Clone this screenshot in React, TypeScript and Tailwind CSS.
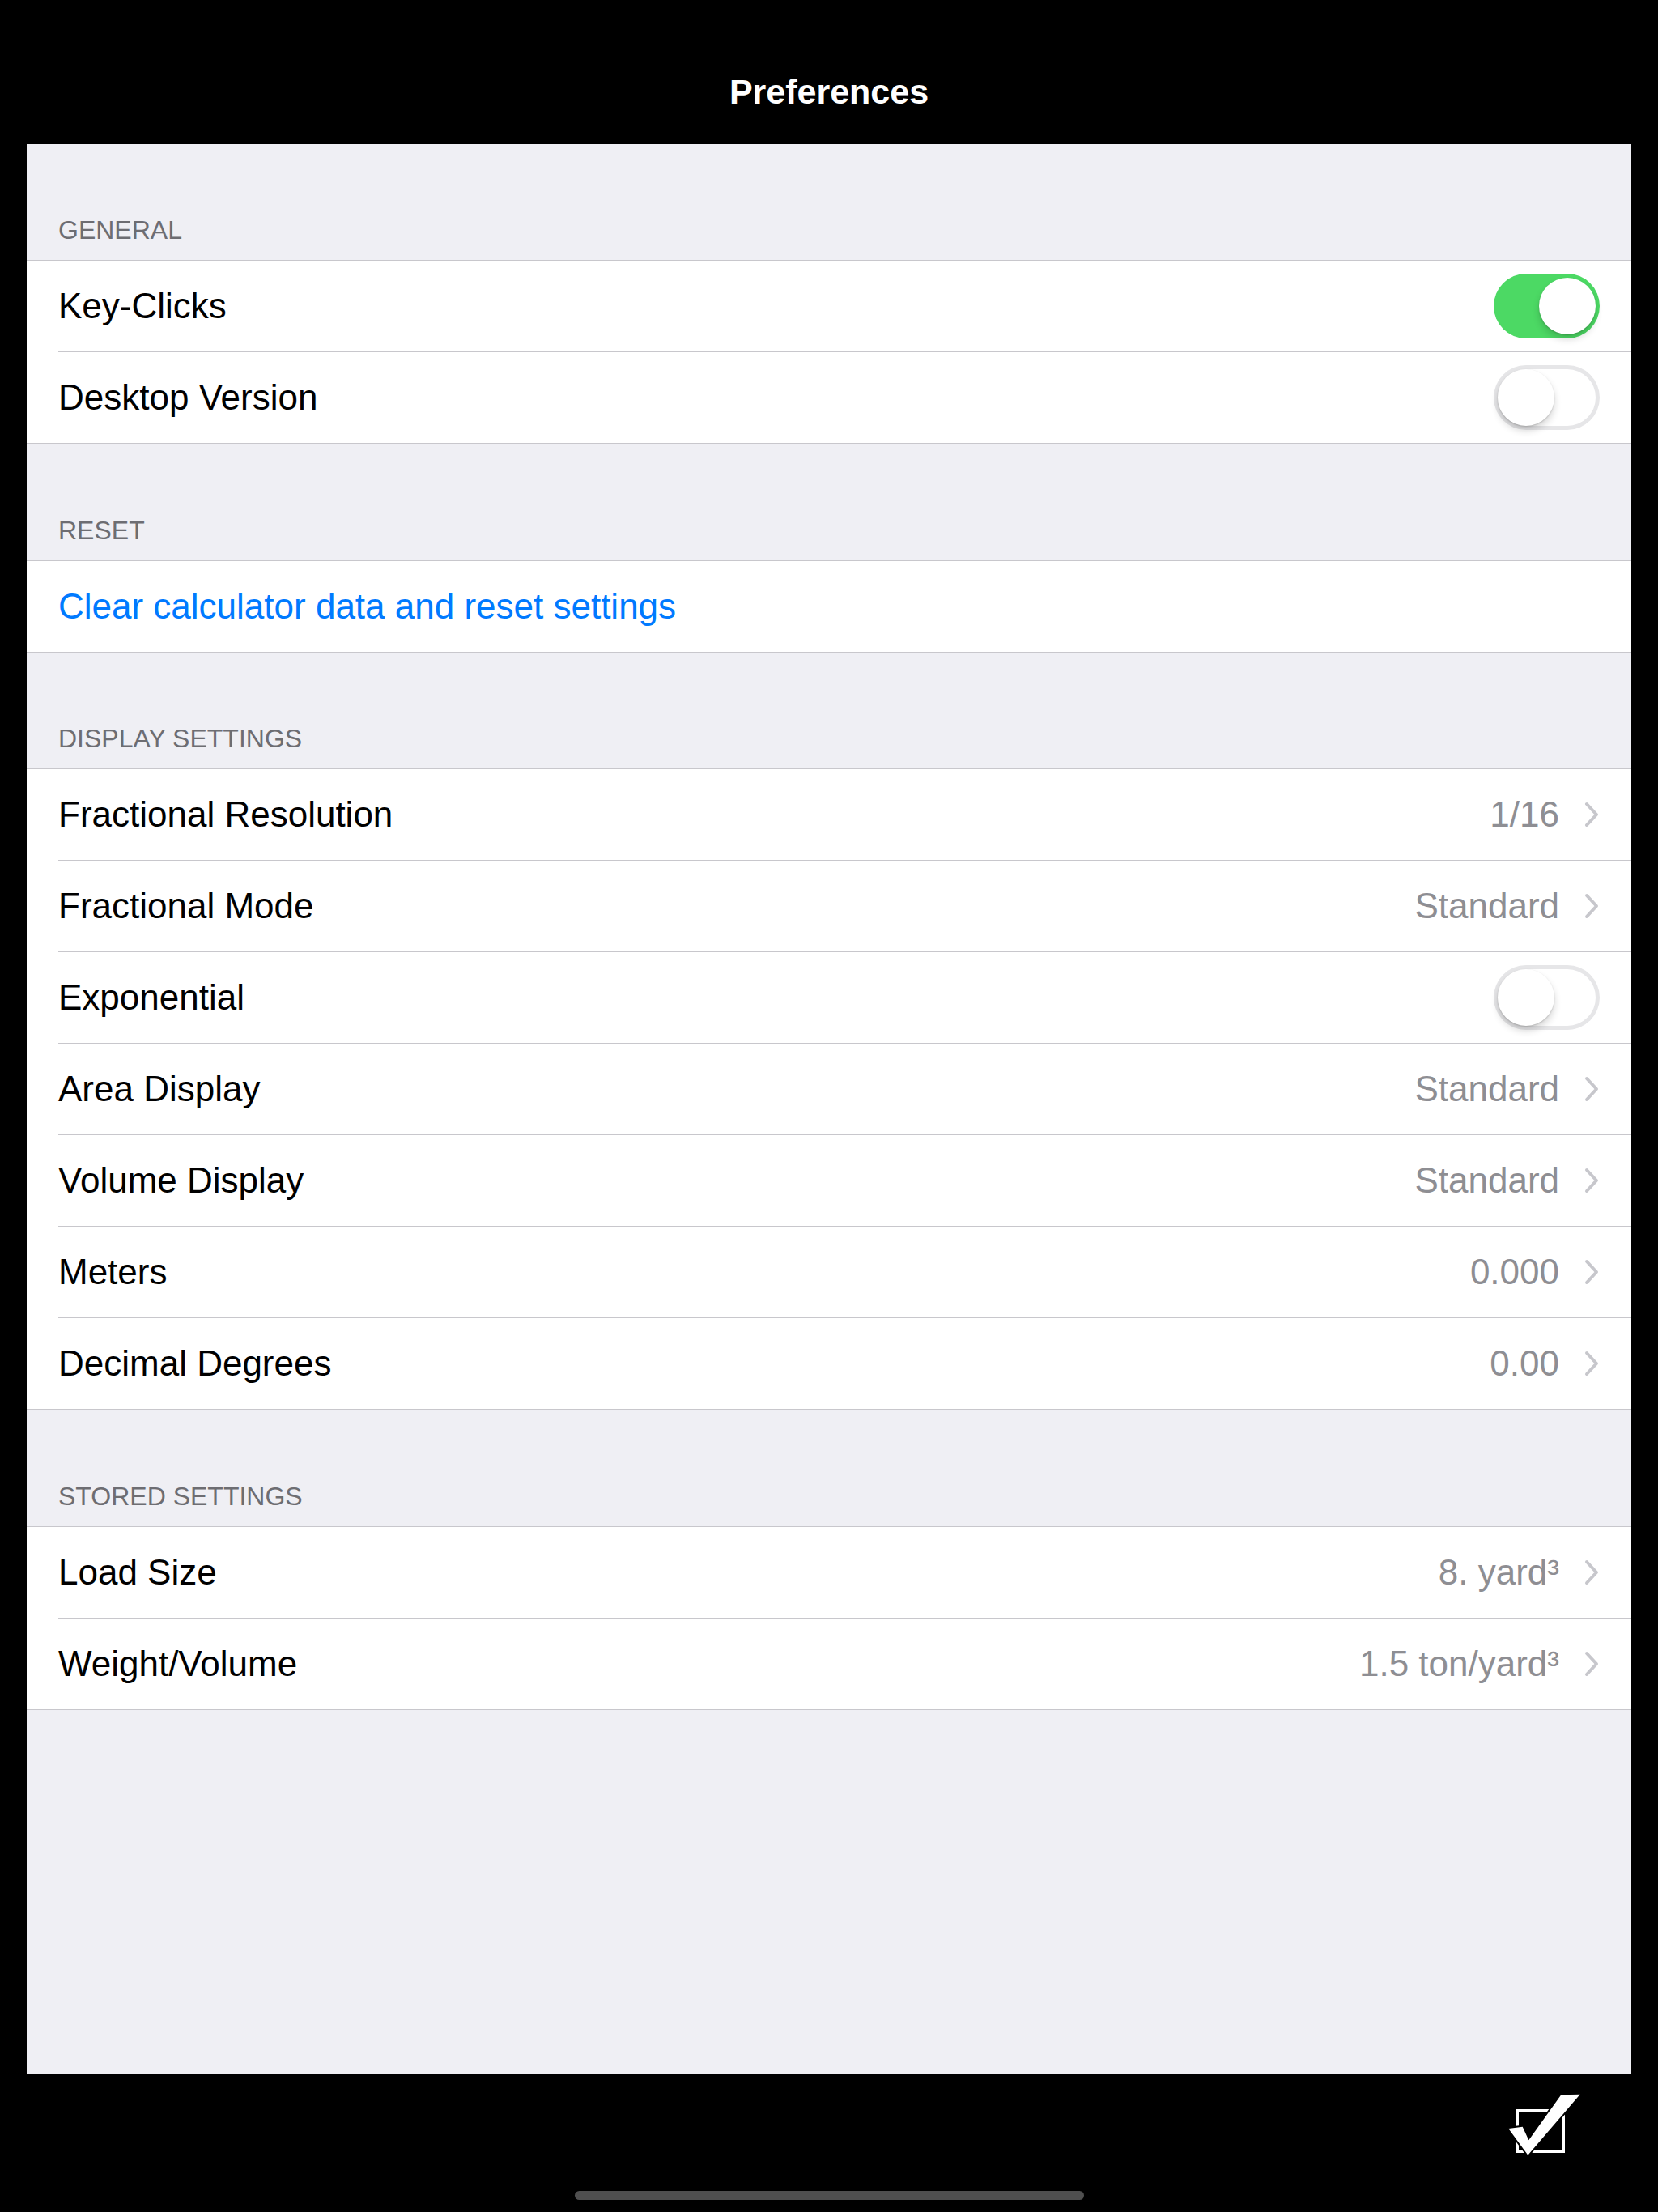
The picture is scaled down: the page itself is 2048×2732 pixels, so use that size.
import React from "react";

type Row =
  | { kind: "toggle"; label: string; on: boolean }
  | { kind: "value"; label: string; value: string }
  | { kind: "action"; label: string };

type Section = { title: string; headerClass: string; rows: Row[] };

const sections: Section[] = [
  {
    title: "GENERAL",
    headerClass: "h-[143px]",
    rows: [
      { kind: "toggle", label: "Key-Clicks", on: true },
      { kind: "toggle", label: "Desktop Version", on: false },
    ],
  },
  {
    title: "RESET",
    headerClass: "h-[144px]",
    rows: [{ kind: "action", label: "Clear calculator data and reset settings" }],
  },
  {
    title: "DISPLAY SETTINGS",
    headerClass: "h-[143px]",
    rows: [
      { kind: "value", label: "Fractional Resolution", value: "1/16" },
      { kind: "value", label: "Fractional Mode", value: "Standard" },
      { kind: "toggle", label: "Exponential", on: false },
      { kind: "value", label: "Area Display", value: "Standard" },
      { kind: "value", label: "Volume Display", value: "Standard" },
      { kind: "value", label: "Meters", value: "0.000" },
      { kind: "value", label: "Decimal Degrees", value: "0.00" },
    ],
  },
  {
    title: "STORED SETTINGS",
    headerClass: "h-[144px]",
    rows: [
      { kind: "value", label: "Load Size", value: "8. yard³" },
      { kind: "value", label: "Weight/Volume", value: "1.5 ton/yard³" },
    ],
  },
];

function Toggle({ on }: { on: boolean }) {
  const knob =
    "w-[70px] h-[70px] rounded-full bg-white shadow-[0_6px_10px_rgba(0,0,0,0.16),0_1px_2px_rgba(0,0,0,0.18)]";
  if (on) {
    return (
      <div className="w-[131px] h-[80px] rounded-full bg-[#4cd964] flex items-center justify-end pr-[5px]">
        <div className={knob} />
      </div>
    );
  }
  return (
    <div className="w-[131px] h-[80px] rounded-full bg-white shadow-[inset_0_0_0_5px_#e6e6e8] flex items-center pl-[5px]">
      <div className={knob} />
    </div>
  );
}

function Chevron() {
  return (
    <svg width="18" height="32" viewBox="0 0 18 32" className="ml-[31px] shrink-0">
      <path
        d="M3 3 L15 16 L3 29"
        fill="none"
        stroke="#c7c7cc"
        strokeWidth="4"
        strokeLinecap="round"
        strokeLinejoin="round"
      />
    </svg>
  );
}

function RowView({ row }: { row: Row }) {
  if (row.kind === "toggle") {
    return (
      <div className="h-[112px] flex items-center justify-between pl-[39px] pr-[39px]">
        <span className="text-[44px] leading-[48px] text-black">{row.label}</span>
        <Toggle on={row.on} />
      </div>
    );
  }
  if (row.kind === "action") {
    return (
      <div className="h-[112px] flex items-center pl-[39px] pr-[39px]">
        <span className="text-[44px] leading-[48px] text-[#007aff]">{row.label}</span>
      </div>
    );
  }
  return (
    <div className="h-[112px] flex items-center justify-between pl-[39px] pr-[40px]">
      <span className="text-[44px] leading-[48px] text-black">{row.label}</span>
      <div className="flex items-center">
        <span className="text-[44px] leading-[48px] text-[#8e8e93]">{row.value}</span>
        <Chevron />
      </div>
    </div>
  );
}

function CheckIcon() {
  return (
    <svg width="96" height="86" viewBox="0 0 96 86">
      <rect x="14" y="27" width="57" height="50" fill="none" stroke="#ffffff" strokeWidth="4" />
      <polygon
        points="3.3,49 20.7,46.7 28.3,63.3 68.3,7.3 91.7,6.7 27.3,81.7"
        fill="#ffffff"
        stroke="#000000"
        strokeWidth="4"
        strokeLinejoin="miter"
        style={{ paintOrder: "stroke" }}
      />
    </svg>
  );
}

export default function App() {
  return (
    <div className="w-[2048px] h-[2732px] bg-black flex flex-col font-['Liberation_Sans',Arial,sans-serif] overflow-hidden">
      <header className="h-[178px] shrink-0 flex justify-center pt-[89px]">
        <h1 className="text-[43px] leading-[48px] font-bold text-white">Preferences</h1>
      </header>

      <main className="mx-[33px] h-[2384px] shrink-0 bg-[#efeff4] flex flex-col">
        {sections.map((section) => (
          <section key={section.title} className="flex flex-col">
            <div className={`${section.headerClass} flex items-end pl-[39px] pb-[19px]`}>
              <span className="text-[32px] leading-[36px] text-[#6d6d72]">{section.title}</span>
            </div>
            <div className="bg-white border-y border-[#c8c7cc]">
              {section.rows.map((row, i) => (
                <div key={row.label}>
                  {i > 0 && <div className="ml-[39px] h-px bg-[#c8c7cc]" />}
                  <RowView row={row} />
                </div>
              ))}
            </div>
          </section>
        ))}
      </main>

      <footer className="flex-1 flex flex-col">
        <div className="flex justify-end pt-[18px] pr-[92px]">
          <CheckIcon />
        </div>
        <div className="mt-[40px] flex justify-center">
          <div className="w-[629px] h-[11px] rounded-full bg-[#4f4f4f]" />
        </div>
      </footer>
    </div>
  );
}
